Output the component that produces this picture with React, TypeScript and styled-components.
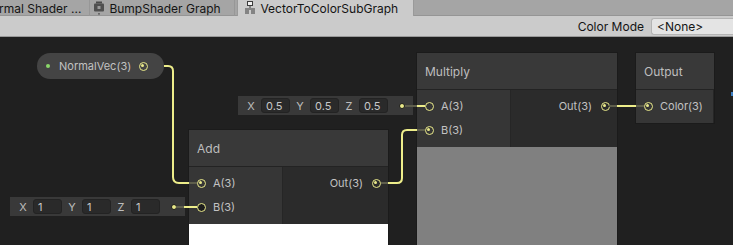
import styled, { createGlobalStyle } from "styled-components";

const GlobalStyle = createGlobalStyle`
  html, body {
    margin: 0;
    padding: 0;
    overflow: hidden;
    background: #202020;
  }
  body {
    font-family: Inter, "Liberation Sans", sans-serif;
  }
`;

const WIRE = "#eded8a";
const STUB = "#5e5e4c";

const App = () => {
  return (
    <>
      <GlobalStyle />
      <Page>
        <TabBar>
          <Tab $first>rmal Shader ...</Tab>
          <Tab $width={145}>
            <ShaderIcon />
            BumpShader Graph
          </Tab>
          <Gap />
          <Tab $active $width={177}>
            <SubGraphIcon />
            VectorToColorSubGraph
          </Tab>
        </TabBar>
        <Toolbar>
          <ToolLabel>Color Mode</ToolLabel>
          <Dropdown>&lt;None&gt;</Dropdown>
        </Toolbar>

        <Canvas>
          <Pill style={{ left: 37, top: 16 }}>
            <GreenDot />
            <PillText>NormalVec(3)</PillText>
            <Port $state="filled" />
          </Pill>

          <VectorBox style={{ left: 238, top: 59 }}>
            <Axis>X</Axis>
            <Field>0.5</Field>
            <Axis>Y</Axis>
            <Field>0.5</Field>
            <Axis>Z</Axis>
            <Field>0.5</Field>
            <SmallDot />
          </VectorBox>

          <VectorBox style={{ left: 10, top: 160 }}>
            <Axis>X</Axis>
            <Field>1</Field>
            <Axis>Y</Axis>
            <Field>1</Field>
            <Axis>Z</Axis>
            <Field>1</Field>
            <SmallDot />
          </VectorBox>

          <Node style={{ left: 189, top: 93 }} $width={199}>
            <Header>Add</Header>
            <Body>
              <Inputs $width={94}>
                <InRow>
                  <Port $state="filled" />
                  <PortLabel>A(3)</PortLabel>
                </InRow>
                <InRow>
                  <Port $state="dark" />
                  <PortLabel>B(3)</PortLabel>
                </InRow>
              </Inputs>
              <Outputs>
                <OutRow>
                  <PortLabel>Out(3)</PortLabel>
                  <Port $state="filled" />
                </OutRow>
              </Outputs>
            </Body>
            <Preview $color="#ffffff" />
          </Node>

          <Node style={{ left: 417, top: 16 }} $width={200}>
            <Header>Multiply</Header>
            <Body>
              <Inputs $width={94}>
                <InRow>
                  <Port $state="hollow" />
                  <PortLabel>A(3)</PortLabel>
                </InRow>
                <InRow>
                  <Port $state="filled" />
                  <PortLabel>B(3)</PortLabel>
                </InRow>
              </Inputs>
              <Outputs>
                <OutRow>
                  <PortLabel>Out(3)</PortLabel>
                  <Port $state="filled" />
                </OutRow>
              </Outputs>
            </Body>
            <Preview $color="#808080" />
          </Node>

          <Node style={{ left: 636, top: 16 }} $width={78}>
            <Header>Output</Header>
            <Body>
              <Inputs $width={78}>
                <InRow>
                  <Port $state="filled" />
                  <PortLabel>Color(3)</PortLabel>
                </InRow>
              </Inputs>
            </Body>
          </Node>

          <BlueMark />

          <Wires width={733} height={208}>
            <g fill="none" strokeWidth={2}>
              <path d="M164,29 H168 Q173,29 173,34 V140 Q173,146 179,146 H189" stroke={WIRE} />
              <path d="M189,146 H197" stroke={STUB} />

              <path d="M176,170 H184" stroke={STUB} />
              <path d="M184,170 H197" stroke={WIRE} />

              <path d="M381,146 H388" stroke={STUB} />
              <path d="M388,146 H397 Q402,146 402,141 V98 Q402,93 407,93 H417" stroke={WIRE} />
              <path d="M417,93 H425" stroke={STUB} />

              <path d="M405,69 H417" stroke={STUB} />
              <path d="M417,69 H425" stroke={WIRE} />

              <path d="M609,69 H617" stroke={STUB} />
              <path d="M617,69 H636" stroke={WIRE} />
              <path d="M636,69 H644" stroke={STUB} />
            </g>
          </Wires>
        </Canvas>
      </Page>
    </>
  );
};

export default App;

const ShaderIcon = () => (
  <IconSvg width={12} height={14} viewBox="0 0 12 14">
    <rect x="3" y="0.5" width="6" height="2" fill="#4a4a4a" />
    <rect x="1" y="2.5" width="10" height="8" rx="1" fill="#505050" />
    <rect x="4.5" y="5" width="3" height="3" fill="#9a9a9a" />
    <circle cx="6" cy="12.8" r="0.9" fill="#505050" />
  </IconSvg>
);

const SubGraphIcon = () => (
  <IconSvg width={12} height={14} viewBox="0 0 12 14">
    <rect x="3.5" y="0.5" width="5" height="4" fill="#f2f2f2" stroke="#3c3c3c" />
    <path d="M6 5 V7 M1 8 H11 M1 10 H5 M7 10 H11 M1 12 H5 M7 12 H11" stroke="#3c3c3c" strokeWidth="1" />
  </IconSvg>
);

const Page = styled.div`
  width: 733px;
  height: 245px;
  display: flex;
  flex-direction: column;
  overflow: hidden;
`;

const TabBar = styled.div`
  height: 16px;
  display: flex;
  background: #a5a5a5;
  box-shadow: inset 0 -1px #959595;
`;

const Tab = styled.div<{ $active?: boolean; $first?: boolean; $width?: number }>`
  display: flex;
  align-items: center;
  gap: 4px;
  box-sizing: border-box;
  width: ${(p) => (p.$width ? `${p.$width}px` : "auto")};
  padding-left: ${(p) => (p.$first ? "0" : p.$active ? "6px" : "3px")};
  margin-left: ${(p) => (p.$first ? "-1px" : "0")};
  padding-right: ${(p) => (p.$first ? "8px" : "0")};
  font-size: 12px;
  color: #141414;
  white-space: nowrap;
  background: ${(p) => (p.$active ? "#cbcbcb" : "transparent")};
  border-right: 1px solid ${(p) => (p.$active ? "#9a9a9a" : "#979797")};
  border-left: ${(p) => (p.$active ? "1px solid #9a9a9a" : "none")};
`;

const Gap = styled.div`
  width: 2px;
`;

const IconSvg = styled.svg`
  flex: none;
`;

const Toolbar = styled.div`
  height: 20px;
  display: flex;
  align-items: center;
  justify-content: flex-end;
  background: #cbcbcb;
  border-bottom: 1px solid #999999;
`;

const ToolLabel = styled.span`
  font-size: 12px;
  color: #141414;
  margin-right: 7px;
`;

const Dropdown = styled.div`
  box-sizing: border-box;
  width: 82px;
  height: 17px;
  margin-top: 1px;
  padding-left: 5px;
  display: flex;
  align-items: center;
  font-size: 12px;
  color: #141414;
  background: #e4e4e4;
  border: 1px solid #b4b4b4;
  border-right: none;
  border-radius: 3px 0 0 3px;
`;

const Canvas = styled.div`
  position: relative;
  flex: 1;
  background: #202020;
  overflow: hidden;
`;

const Pill = styled.div`
  position: absolute;
  box-sizing: border-box;
  width: 127px;
  height: 26px;
  display: flex;
  align-items: center;
  padding: 0 16px 0 9px;
  background: #444444;
  border-radius: 13px;
`;

const GreenDot = styled.span`
  width: 4px;
  height: 4px;
  border-radius: 50%;
  background: #8bd86a;
  margin-right: 9px;
`;

const PillText = styled.span`
  font-size: 11px;
  color: #c2c2c2;
  flex: 1;
`;

const Port = styled.span<{ $state: "filled" | "hollow" | "dark" }>`
  position: relative;
  flex: none;
  box-sizing: border-box;
  width: 9px;
  height: 9px;
  border-radius: 50%;
  border: 1.5px solid #e9e98a;
  background: ${(p) => (p.$state === "dark" ? "#1c1c1c" : "transparent")};

  &::after {
    content: "";
    display: ${(p) => (p.$state === "filled" ? "block" : "none")};
    position: absolute;
    left: 1px;
    top: 1px;
    width: 3px;
    height: 3px;
    border-radius: 50%;
    background: #e9e98a;
  }
`;

const VectorBox = styled.div`
  position: absolute;
  box-sizing: border-box;
  height: 19px;
  display: flex;
  align-items: center;
  padding: 0 8px 0 3px;
  background: #393939;
`;

const Axis = styled.span`
  width: 20px;
  text-align: center;
  font-size: 11px;
  color: #bdbdbd;
`;

const Field = styled.span`
  box-sizing: border-box;
  width: 29px;
  height: 15px;
  padding-left: 4px;
  display: flex;
  align-items: center;
  font-size: 11px;
  color: #c8c8c8;
  background: #2a2a2a;
  border: 1px solid #232323;
  border-radius: 3px;
`;

const SmallDot = styled.span`
  box-sizing: border-box;
  width: 6px;
  height: 6px;
  margin-left: 11px;
  border-radius: 50%;
  background: #e9e98a;
  border: 1px solid #1a1a1a;
`;

const Node = styled.div<{ $width: number }>`
  position: absolute;
  width: ${(p) => p.$width}px;
  display: flex;
  flex-direction: column;
  background: #2b2b2b;
  box-shadow: 0 0 0 1px #1b1b1b;
`;

const Header = styled.div`
  height: 36px;
  display: flex;
  align-items: center;
  padding-left: 8px;
  font-size: 12px;
  color: #bebebe;
  background: #393939;
  border-bottom: 1px solid #232323;
`;

const Body = styled.div`
  display: flex;
`;

const Inputs = styled.div<{ $width: number }>`
  box-sizing: border-box;
  width: ${(p) => p.$width}px;
  padding: 4px 0 5px;
  background: #363636;
  border-right: 1px solid #262626;
`;

const Outputs = styled.div`
  flex: 1;
  padding: 4px 0 5px;
  background: #2b2b2b;
`;

const InRow = styled.div`
  height: 24px;
  display: flex;
  align-items: center;
  gap: 7px;
  padding-left: 8px;
`;

const OutRow = styled.div`
  height: 24px;
  display: flex;
  align-items: center;
  justify-content: flex-end;
  gap: 9px;
  padding-right: 7px;
`;

const PortLabel = styled.span`
  font-size: 11px;
  color: #c2c2c2;
  white-space: nowrap;
`;

const Preview = styled.div<{ $color: string }>`
  height: 200px;
  background: ${(p) => p.$color};
`;

const BlueMark = styled.div`
  position: absolute;
  right: 0;
  top: 55px;
  width: 2px;
  height: 4px;
  background: #3d7fc4;
`;

const Wires = styled.svg`
  position: absolute;
  left: 0;
  top: 0;
  pointer-events: none;
`;
